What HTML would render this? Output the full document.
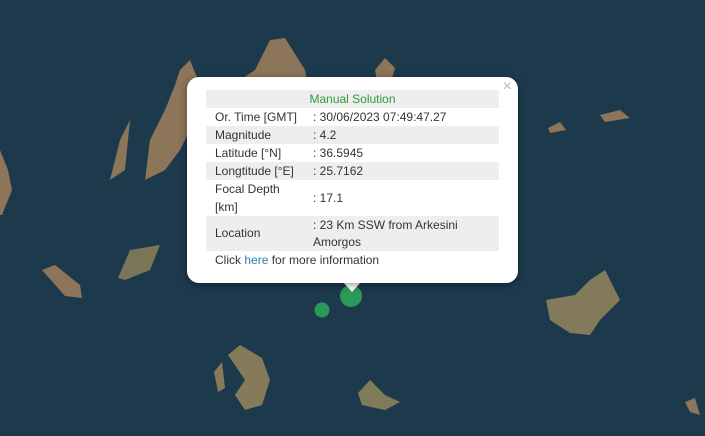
<!DOCTYPE html>
<html><head><style>
body{margin:0;width:705px;height:436px;overflow:hidden;background:#1d3a4d;font-family:"Liberation Sans",sans-serif;position:relative}
svg{position:absolute;left:0;top:0}
.pop{position:absolute;left:187px;top:77px;width:331px;height:206px;background:#fff;border-radius:12px;box-shadow:0 2px 8px rgba(0,0,0,.4)}
.x{position:absolute;right:6px;top:1px;color:#bbb;font-size:16px}
table{position:absolute;left:19px;top:13px;width:293px;border-collapse:collapse;font-size:12px;color:#333}
td{padding:0 0 0 9px;line-height:18px;height:18px;vertical-align:middle}
tr.g{background:#eee}
td.v{padding-left:0}
.tip{position:absolute;left:343px;top:282px;width:0;height:0;border-left:9px solid transparent;border-right:9px solid transparent;border-top:10px solid #fff}
</style></head><body>
<svg width="705" height="436">
<g fill="#8c7558">
<path d="M145 180 L150 140 L165 110 L175 85 L180 70 L190 60 L200 85 L195 120 L180 150 L165 170Z"/>
<path d="M110 180 L120 140 L130 120 L125 170Z"/>
<path d="M240 80 L255 70 L270 40 L285 38 L305 70 L310 100 L255 100Z"/>
<path d="M375 70 L385 58 L395 68 L390 85 L378 85Z"/>
<path d="M0 150 L8 170 L12 190 L2 215 L0 215Z"/>
<path d="M118 278 L130 250 L160 245 L150 270 L125 280Z" fill="#7a7556"/>
<path d="M42 270 L55 265 L80 285 L82 298 L65 296Z"/>
<path d="M546 300 L575 295 L590 280 L605 270 L620 300 L600 320 L590 335 L570 333 L550 320Z" fill="#827a5a"/>
<path d="M228 355 L240 345 L262 358 L270 380 L262 405 L245 410 L235 395 L245 380Z" fill="#857a5a"/>
<path d="M214 372 L222 362 L225 388 L218 392Z" fill="#857a5a"/>
<path d="M358 393 L370 380 L385 395 L400 402 L385 410 L362 405Z" fill="#7f7a58"/>
<path d="M600 115 L620 110 L630 118 L605 122Z"/>
<path d="M548 128 L560 122 L566 130 L550 133Z"/>
<path d="M685 402 L695 398 L700 415 L690 412Z"/>
</g>
<circle cx="351" cy="296" r="11" fill="#2a9a5a"/>
<circle cx="322" cy="310" r="7.5" fill="#2a9a5a"/>
</svg>
<div class="tip"></div>
<div class="pop"><div class="x">×</div>
<table>
<tr class="g"><td colspan="2" style="text-align:center;color:#2e9a3a;padding:0">Manual Solution</td></tr>
<tr><td style="width:98px">Or. Time [GMT]</td><td class="v">: 30/06/2023 07:49:47.27</td></tr>
<tr class="g"><td>Magnitude</td><td class="v">: 4.2</td></tr>
<tr><td>Latitude [°N]</td><td class="v">: 36.5945</td></tr>
<tr class="g"><td>Longtitude [°E]</td><td class="v">: 25.7162</td></tr>
<tr><td style="height:36px">Focal Depth<br>[km]</td><td class="v">: 17.1</td></tr>
<tr class="g"><td style="height:35px;line-height:17px">Location</td><td class="v" style="line-height:17px">: 23 Km SSW from Arkesini<br>Amorgos</td></tr>
<tr><td colspan="2">Click <span style="color:#2b7bb0">here</span> for more information</td></tr>
</table></div>
</body></html>
